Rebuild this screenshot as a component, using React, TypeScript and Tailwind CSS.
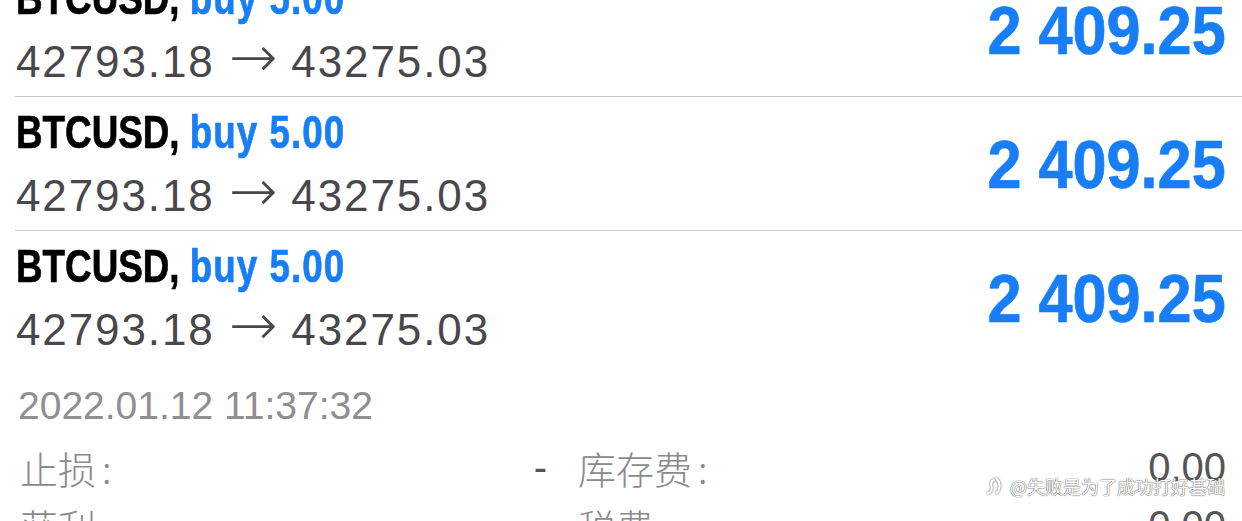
const TradeRow = ({ last }: { last?: boolean }) => {
  return (
    <div className="pl-[15px]">
      <div
        className={`flex items-center justify-between h-[134px] pl-px pr-4 ${
          last ? "" : "border-b border-[#c8c7cc]"
        }`}
      >
        <div>
          <div className="h-[56px] leading-[56px]">
            <span className="inline-block origin-left scale-x-[0.8] whitespace-nowrap text-[46px] font-bold text-black font-['Liberation_Sans',sans-serif] [-webkit-text-stroke:0.7px_currentColor]">
              BTCUSD, <span className="text-[#177ef7] tracking-[1.3px]">buy 5.00</span>
            </span>
          </div>
          <div className="mt-2 text-[44px] leading-[56px] tracking-[1.9px] text-[#48484c] font-['Liberation_Sans',sans-serif] whitespace-nowrap">
            42793.18
            <span className="mx-[14px] text-[58px] leading-[0] tracking-normal font-['DejaVu_Sans',sans-serif] font-extralight">→</span>
            43275.03
          </div>
        </div>
        <div className="inline-block origin-right scale-x-[0.9] text-[68px] leading-none font-bold text-[#177ef7] font-['Liberation_Sans',sans-serif] [-webkit-text-stroke:0.7px_currentColor]">
          2 409.25
        </div>
      </div>
    </div>
  );
};

const Field = ({ label, value }: { label: string; value: string }) => (
  <div className="flex items-center justify-between h-[58px]">
    <span className="text-[38px] text-[#8a8a8a] font-['Noto_Sans_CJK_SC',sans-serif] font-light">
      {label}
      <span className="ml-[6px]">:</span>
    </span>
    <span className="text-[40px] text-[#555558] font-['Liberation_Sans',sans-serif]">{value}</span>
  </div>
);

const App = () => {
  return (
    <div className="relative w-[1242px] h-[521px] overflow-hidden bg-white">
      <div className="-mt-[37px]">
        <TradeRow />
        <TradeRow />
        <TradeRow last />
      </div>
      <div className="pl-[18px] pt-[17px] text-[39px] leading-[48px] text-[#8e8e93] font-['Liberation_Sans',sans-serif]">
        2022.01.12 11:37:32
      </div>
      <div className="grid grid-cols-[527px_1fr] gap-x-[31px] pl-5 pr-4 mt-[8px]">
        <Field label="止损" value="-" />
        <Field label="库存费" value="0.00" />
        <Field label="获利" value="" />
        <Field label="税费" value="0.00" />
      </div>
      <div className="absolute left-[985px] top-[476px] flex items-center gap-[7px]">
        <svg width="18" height="20" viewBox="0 0 18 20" fill="none" stroke="#fff" strokeWidth="2.2" strokeLinecap="round">
          <g style={{ filter: "drop-shadow(0 0 1px #555)" }}>
            <path d="M9 4 C6 4 6 8 6.5 11 C7 14 6 17 3 17" />
            <path d="M11.5 3 C15.5 6 15.5 14 11.5 17" />
          </g>
        </svg>
        <span
          className="text-[18px] leading-none text-white font-['Noto_Sans_CJK_SC',sans-serif]"
          style={{ textShadow: "0 0 1px #555, 0 0 1px #555" }}
        >
          @失败是为了成功打好基础
        </span>
      </div>
    </div>
  );
};

export default App;
